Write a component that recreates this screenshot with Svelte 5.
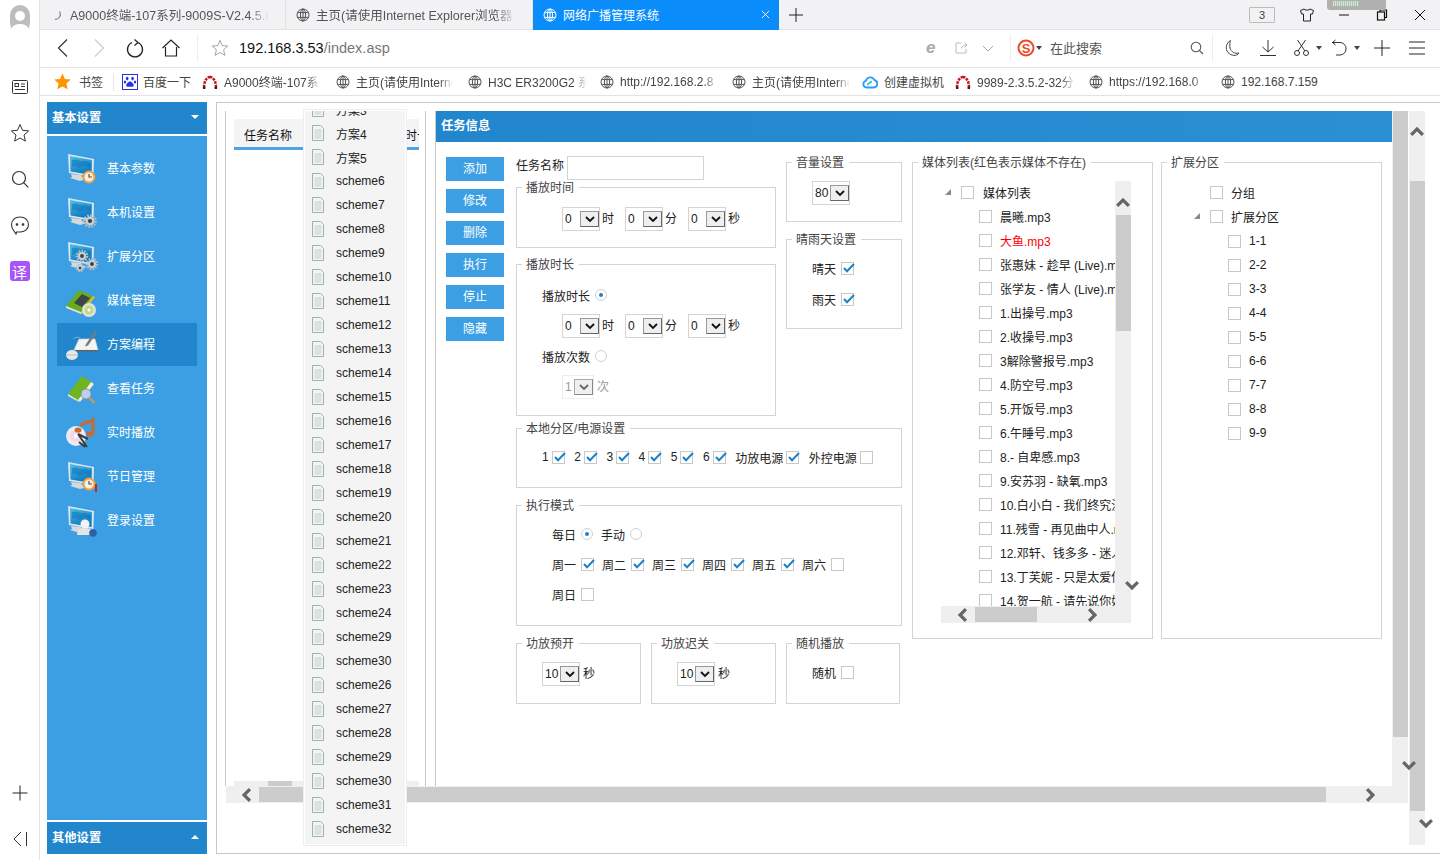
<script lang="ts">
  const tabs = [
    { icon: 'spin', label: 'A9000终端-107系列-9009S-V2.4.5.8', width: 246 },
    { icon: 'globe', label: '主页(请使用Internet Explorer浏览器', width: 247 },
    { icon: 'globe', label: '网络广播管理系统', width: 246, active: true },
  ];

  const bookmarks = [
    { icon: 'paw', label: '百度一下', w: 48, gap: 11 },
    { icon: 'arch', label: 'A9000终端-107系列', w: 97, gap: 15 },
    { icon: 'globe', label: '主页(请使用Internet', w: 97, gap: 15 },
    { icon: 'globe', label: 'H3C ER3200G2 系统', w: 99, gap: 13 },
    { icon: 'globe', label: 'http://192.168.2.8', w: 98, gap: 14 },
    { icon: 'globe', label: '主页(请使用Internet', w: 98, gap: 12 },
    { icon: 'cloud', label: '创建虚拟机', w: 60, gap: 11 },
    { icon: 'arch', label: '9989-2.3.5.2-32分区', w: 98, gap: 14 },
    { icon: 'globe', label: 'https://192.168.0', w: 97, gap: 15 },
    { icon: 'globe', label: '192.168.7.159', w: 80, gap: 0 },
  ];

  const menu = [
    { icon: 'clock', label: '基本参数' },
    { icon: 'gear', label: '本机设置' },
    { icon: 'gears', label: '扩展分区' },
    { icon: 'media', label: '媒体管理' },
    { icon: 'plan', label: '方案编程', active: true },
    { icon: 'task', label: '查看任务' },
    { icon: 'live', label: '实时播放' },
    { icon: 'holiday', label: '节日管理' },
    { icon: 'user', label: '登录设置' },
  ];

  const schemes = [
    '方案3', '方案4', '方案5',
    ...Array.from({ length: 19 }, (_, i) => 'scheme' + (i + 6)),
    'scheme29', 'scheme30', 'scheme26', 'scheme27', 'scheme28', 'scheme29', 'scheme30', 'scheme31', 'scheme32',
  ];

  const buttons = ['添加', '修改', '删除', '执行', '停止', '隐藏'];
  const zones = [
    { label: '1', on: true }, { label: '2', on: true }, { label: '3', on: true },
    { label: '4', on: true }, { label: '5', on: true }, { label: '6', on: true },
    { label: '功放电源', on: true }, { label: '外控电源', on: false },
  ];
  const days = [
    { label: '周一', on: true }, { label: '周二', on: true }, { label: '周三', on: true },
    { label: '周四', on: true }, { label: '周五', on: true }, { label: '周六', on: false },
  ];

  const media = [
    '晨曦.mp3', '大鱼.mp3', '张惠妹 - 趁早 (Live).mp3', '张学友 - 情人 (Live).mp3',
    '1.出操号.mp3', '2.收操号.mp3', '3解除警报号.mp3', '4.防空号.mp3', '5.开饭号.mp3', '6.午睡号.mp3',
    '8.- 自卑感.mp3', '9.安苏羽 - 缺氧.mp3', '10.白小白 - 我们终究没能走到', '11.残雪 - 再见曲中人.mp3',
    '12.邓轩、钱多多 - 迷人的危险', '13.丁芙妮 - 只是太爱你.mp3', '14.贺一航 - 请先说你好.mp3',
  ];
  const zonesExt = ['1-1', '2-2', '3-3', '4-4', '5-5', '6-6', '7-7', '8-8', '9-9'];
</script>

{#snippet globe(color = '#555')}
  <svg class="fav" viewBox="0 0 14 14" fill="none" stroke={color} stroke-width="1">
    <circle cx="7" cy="7" r="6" />
    <ellipse cx="7" cy="7" rx="2.6" ry="6" />
    <path d="M1.5 4.6h11M1.5 9.4h11M7 1v12" />
  </svg>
{/snippet}

{#snippet favicon(kind: string)}
  {#if kind === 'globe'}
    {@render globe()}
  {:else if kind === 'spin'}
    <svg class="fav" viewBox="0 0 14 14" fill="none" stroke="#888" stroke-width="1.2"><path d="M9.5 3.5a5 5 0 0 1-4.5 7.8" /></svg>
  {:else if kind === 'paw'}
    <svg class="fav paw" viewBox="0 0 16 16">
      <rect x=".5" y=".5" width="15" height="15" fill="#fff" stroke="#2932e1" />
      <g fill="#2932e1"><ellipse cx="5.2" cy="4.6" rx="1.3" ry="1.8" /><ellipse cx="10.6" cy="4.6" rx="1.3" ry="1.8" /><ellipse cx="3" cy="8" rx="1.2" ry="1.6" /><ellipse cx="13" cy="8" rx="1.2" ry="1.6" /><path d="M8 7.4c2 0 3.8 2.6 3.8 4.2 0 1.6-2.4 1.2-3.8 1.2s-3.8.4-3.8-1.2C4.2 10 6 7.4 8 7.4z" /></g>
    </svg>
  {:else if kind === 'arch'}
    <svg class="fav arch" viewBox="0 0 16 14" fill="none" stroke-width="2.6">
      <path d="M2 12.5C2 6 5 2 8 2" stroke="#c8141c" stroke-dasharray="2.6 1" />
      <path d="M14 12.5C14 6 11 2 8 2" stroke="#c8141c" stroke-dasharray="2.6 1" />
      <path d="M1 13h2.4M12.6 13H15" stroke="#222" />
    </svg>
  {:else if kind === 'cloud'}
    <svg class="fav arch" viewBox="0 0 16 14" fill="none" stroke-width="1.8">
      <path d="M4.5 12.5a3.4 3.4 0 0 1-.5-6.7A4.4 4.4 0 0 1 12.3 5a3.8 3.8 0 0 1-.3 7.5z" stroke="#2a9df4" />
      <path d="M5 9.5c2 0 2.6-2.8 5-2.8" stroke="#27c2e0" />
    </svg>
  {/if}
{/snippet}

{#snippet monitor()}
  <path d="M6 22l1 3-2 1 10 3 7-2-5-2-1-2z" fill="#d5d9dc" />
  <path d="M3 2l26 5-.6 18L4 21z" fill="#dbe6ec" />
  <path d="M5 4l22 4-.5 15L5.5 19.5z" fill="url(#screen)" />
  <path d="M7 8c5-2 8 2 11 1s5 2 8 1l-.2 5c-3 1-4-2-7-1s-4 3-6 1-4-1-5.5 0z" fill="#0f74b8" opacity=".55" />
{/snippet}

{#snippet gear(x: number, y: number, r: number)}
  <g transform="translate({x} {y})">
    <circle r={r} fill="none" stroke="#b6bcc0" stroke-width={r * 0.5} stroke-dasharray="1.6 1.2" />
    <circle r={r * 0.8} fill="#c9ced1" />
    <circle r={r * 0.38} fill="#39424a" />
  </g>
{/snippet}

{#snippet clock(x: number, y: number)}
  <circle cx={x} cy={y} r="6.5" fill="#f0a040" />
  <circle cx={x} cy={y} r="4.5" fill="#f5efe4" />
  <path d="M{x} {y - 3}v3h3" fill="none" stroke="#6a4a20" stroke-width="1.2" />
{/snippet}

{#snippet bookIcon()}
  <path d="M3 22L17 4l9 6-13 18z" fill="#6fb51d" />
  <path d="M3 22l10 6 1 2-11-6z" fill="#e9e6c8" />
  <path d="M13 28l13-18 3 2-14 18z" fill="#f3eed0" />
{/snippet}

{#snippet menuIcon(kind: string)}
  <svg class="menu-icon" viewBox="0 0 34 34">
    {#if kind === 'clock'}
      {@render monitor()}
      {@render clock(24, 25)}
    {:else if kind === 'gear'}
      {@render monitor()}
      {@render gear(25, 25, 5.5)}
    {:else if kind === 'gears'}
      {@render monitor()}
      {@render gear(17, 16, 5)}
      {@render gear(27, 24, 5)}
      {@render gear(15, 28, 3.5)}
    {:else if kind === 'media'}
      <path d="M1 22L14 6l14 6-12 16z" fill="#67ad1e" />
      <path d="M9 19l8-9 8 4-8 9z" fill="#3f4648" />
      <path d="M1 22l15 6v2L1 24z" fill="#e4e2c8" />
      <path d="M28 12l2 1-13 17h-1v-2z" fill="#e9b93a" />
      <circle cx="24" cy="26" r="7" fill="#dfe4da" />
      <circle cx="24" cy="26" r="4.5" fill="#c5d88a" />
      <circle cx="24" cy="26" r="1.5" fill="#fff" />
    {:else if kind === 'plan'}
      <path d="M9 22l5-11h16l3 11z" fill="#f4f5f3" stroke="#cfd4d4" stroke-width=".6" />
      <path d="M9 22h24v1.5H9z" fill="#5d666c" />
      <path d="M21 16l9-13 2 1.5-9 13-3 1z" fill="#757c80" />
      <path d="M8 11c3-3 8-2 8 1" fill="none" stroke="#88bce0" stroke-width=".8" />
      <ellipse cx="7" cy="27" rx="6" ry="5" fill="#e7e8e6" />
      <path d="M1 27h12" stroke="#aeb3b3" stroke-width=".7" />
    {:else if kind === 'task'}
      {@render bookIcon()}
      <circle cx="21" cy="22" r="5" fill="#c2cfe8" stroke="#8b93aa" stroke-width="1" />
      <path d="M24.5 26l5 5" stroke="#c8a040" stroke-width="2.2" />
    {:else if kind === 'live'}
      <circle cx="11" cy="20" r="10" fill="#f0e9ef" />
      <circle cx="11" cy="20" r="6" fill="#f3d7ea" />
      <circle cx="11" cy="20" r="2" fill="#fff" />
      <path d="M15 9l13-5v14" fill="none" stroke="#c96a30" stroke-width="3" />
      <ellipse cx="13" cy="14" rx="3.5" ry="2.6" fill="#c96a30" />
      <ellipse cx="25" cy="18" rx="3.5" ry="2.6" fill="#c96a30" />
      <path d="M13 18l10 5M13 18l9 13M14 26l6 5" stroke="#3c3c3c" stroke-width="2" />
    {:else if kind === 'holiday'}
      {@render monitor()}
      {@render clock(24, 24)}
      <rect x="30" y="24" width="2" height="8" fill="#c3262c" />
    {:else if kind === 'user'}
      {@render monitor()}
      <circle cx="20" cy="20" r="4.5" fill="#f2f3f4" />
      <path d="M12 31c0-6 4-7 8-7s8 1 8 7z" fill="#e2e4e6" />
      <circle cx="28" cy="29" r="3.8" fill="#2f5fa6" />
    {/if}
  </svg>
{/snippet}

{#snippet chevron(dir: string)}
  <svg class="chev {dir}" viewBox="0 0 12 12" fill="none" stroke="#666" stroke-width="2.8"><path d="M1 3.5l5 5 5-5" /></svg>
{/snippet}

{#snippet check(on: boolean)}
  <span class="cb">
    {#if on}
      <svg viewBox="0 0 13 13" fill="none" stroke="#1f81c5" stroke-width="2"><path d="M2.5 6l3 3.2L12.5 2" /></svg>
    {/if}
  </span>
{/snippet}

{#snippet radio(on: boolean)}
  <span class="radio" class:on></span>
{/snippet}

{#snippet select(value: string, disabled = false, narrow = false)}
  <span class="select" class:disabled class:narrow>
    <span class="select-value">{value}</span>
    <span class="select-btn">
      <svg viewBox="0 0 12 8" fill="none" stroke={disabled ? '#667' : '#111'} stroke-width="1.8"><path d="M2 2l4 4 4-4" /></svg>
    </span>
  </span>
{/snippet}

{#snippet hms()}
  <div class="hms">
    {#each ['时', '分', '秒'] as unit}
      <span class="hms-item">{@render select('0')}<span>{unit}</span></span>
    {/each}
  </div>
{/snippet}

{#snippet triangle()}
  <svg class="tri" viewBox="0 0 7 7"><path d="M7 0v7H0z" fill="#888" /></svg>
{/snippet}

<svg class="defs" width="0" height="0">
  <defs>
    <linearGradient id="screen" x1="0" y1="0" x2="0.4" y2="1">
      <stop offset="0" stop-color="#4fc0ea" />
      <stop offset="1" stop-color="#0e78bf" />
    </linearGradient>
  </defs>
</svg>

<div class="window">
  <aside class="rail">
    <div class="avatar">
      <svg viewBox="0 0 20 28">
        <rect width="20" height="28" rx="10" fill="#bdbdbd" />
        <circle cx="10" cy="11" r="5" fill="#fff" />
        <path d="M1 27c0-6 4-8 9-8s9 2 9 8c-3 2-15 2-18 0z" fill="#fff" />
      </svg>
    </div>
    <div class="rail-icons">
      <svg viewBox="0 0 20 20" fill="none" stroke="#333"><rect x="2.5" y="3.5" width="15" height="13" rx="1" /><rect x="5" y="6.5" width="3.5" height="3" /><path d="M11 7h4M11 9.5h4M5 12.5h10" /></svg>
      <svg viewBox="0 0 20 20" fill="none" stroke="#333"><path d="M10 1.5l2.5 5.8 6.2.6-4.7 4.1 1.4 6.1L10 15l-5.400 3.100L6 12 1.300 7.900l6.200-.6z" /></svg>
      <svg viewBox="0 0 20 20" fill="none" stroke="#333" stroke-width="1.2"><circle cx="9" cy="9" r="6.5" /><path d="M13.8 13.8l4.5 4.5" /></svg>
      <svg viewBox="0 0 20 20" fill="none" stroke="#333" stroke-width="1.1"><path d="M10 2c5 0 8.5 3 8.5 7.5S15 17 10 17H6.5l-.5 2-2-3C2.5 14.5 1.5 12 1.5 9.5 1.5 5 5 2 10 2z" /><circle cx="7" cy="9.5" r=".8" fill="#333" /><circle cx="13" cy="9.5" r=".8" fill="#333" /></svg>
      <span class="translate">译</span>
    </div>
    <div class="rail-bottom">
      <svg viewBox="0 0 20 20" fill="none" stroke="#222"><path d="M10 2.5v15M2.5 10h15" /></svg>
      <svg viewBox="0 0 20 20" fill="none" stroke="#333"><path d="M11 3L4 10l7 7M16.5 3v14" /></svg>
    </div>
  </aside>

  <div class="browser">
    <div class="tabs">
      {#each tabs as tab}
        <div class="tab" class:active={tab.active} style="width: {tab.width}px">
          {#if tab.active}{@render globe('#fff')}{:else}{@render favicon(tab.icon)}{/if}
          <span class="tab-label">{tab.label}</span>
          {#if tab.active}
            <svg class="tab-close" viewBox="0 0 10 10" fill="none" stroke="#fff"><path d="M1 1l8 8M9 1L1 9" /></svg>
          {/if}
        </div>
      {/each}
      <svg class="tab-add" viewBox="0 0 14 14" fill="none" stroke="#222"><path d="M7 0v14M0 7h14" /></svg>
      <div class="tab-right">
        <span class="tab-count">3</span>
        <svg class="shirt" viewBox="0 0 16 16" fill="none" stroke="#222"><path d="M5 2L1.5 3.5 2.5 7H4.5v7h7V7h2l1-3.5L11 2c-.5 1.5-5.5 1.5-6 0z" /></svg>
        <span class="gadget"><i></i></span>
        <svg class="win-btn" viewBox="0 0 12 12" fill="none" stroke="#111"><path d="M1 6h10" /></svg>
        <svg class="win-btn" viewBox="0 0 12 12" fill="none" stroke="#111" stroke-width="1.2"><rect x="1.5" y="3" width="7" height="8" /><path d="M4 3V1h6.5v7.5H8.5" /></svg>
        <svg class="win-btn" viewBox="0 0 12 12" fill="none" stroke="#111"><path d="M1 1l10 10M11 1L1 11" /></svg>
      </div>
    </div>

    <div class="toolbar">
      <svg class="nav" viewBox="0 0 20 20" fill="none" stroke="#333" stroke-width="1.2"><path d="M14 1.5L5.5 10l8.5 8.5" /></svg>
      <svg class="nav" viewBox="0 0 20 20" fill="none" stroke="#ccc" stroke-width="1.2"><path d="M6 1.5L14.5 10 6 18.5" /></svg>
      <svg class="nav" viewBox="0 0 20 20" fill="none" stroke="#222" stroke-width="1.3"><path d="M13 4.5a7.5 7.5 0 1 1-6 0M9.5 1.5l3.5 3-3.5 3" /></svg>
      <svg class="nav" viewBox="0 0 20 20" fill="none" stroke="#222" stroke-width="1.2"><path d="M1.5 10L10 2l8.5 8M4.5 9v9h11V9" /></svg>
      <i class="tool-sep"></i>
      <svg class="addr-star" viewBox="0 0 20 20" fill="none" stroke="#999"><path d="M10 1.5l2.5 5.8 6.2.6-4.7 4.1 1.4 6.1L10 15l-5.4 3.1L6 12 1.3 7.900l6.200-.6z" /></svg>
      <span class="url"><b>192.168.3.53</b>/index.asp</span>
      <div class="tool-right">
        <span class="ie">e</span>
        <svg class="tool-sm share" viewBox="0 0 14 14" fill="none" stroke="#bbb"><path d="M7 2H2v10h10V8M7.5 7.5C8 5 10 4 12.5 4M10.5 1.5L13 4l-2.5 2.5" /></svg>
        <svg class="tool-sm caret" viewBox="0 0 14 14" fill="none" stroke="#aaa"><path d="M2 5l5 5 5-5" /></svg>
        <i class="tool-sep"></i>
        <svg class="sogou" viewBox="0 0 18 18">
          <circle cx="9" cy="9" r="7.5" fill="#fff" stroke="#ef4a24" stroke-width="2" />
          <text x="9" y="13.5" text-anchor="middle" font-family="Liberation Sans" font-weight="700" font-size="13" fill="#ef4a24">S</text>
        </svg>
        <i class="mini-caret sg"></i>
        <span class="search-hint">在此搜索</span>
        <svg class="tool-sm mag" viewBox="0 0 14 14" fill="none" stroke="#555" stroke-width="1.1"><circle cx="6" cy="6" r="4.8" /><path d="M9.5 9.5L13 13" /></svg>
        <i class="tool-sep"></i>
        <svg class="tool-md moon" viewBox="0 0 18 18" fill="none" stroke="#444"><path d="M7.5 1.5C3 4 2 10 5 13.5s9 4 11 .5c-4 1-8-1-9-5-.6-3 0-6 .5-7.5z" /></svg>
        <svg class="tool-md down" viewBox="0 0 18 18" fill="none" stroke="#333"><path d="M9 1v12M3.5 8L9 13l5.5-5M1 16.5h16" /></svg>
        <svg class="tool-md cut" viewBox="0 0 18 18" fill="none" stroke="#333"><circle cx="4" cy="14" r="2.5" /><circle cx="13" cy="14" r="2.5" /><path d="M5 12L12.5 1M12 12L4.5 1" /></svg>
        <i class="mini-caret"></i>
        <svg class="tool-md undo" viewBox="0 0 18 18" fill="none" stroke="#333"><path d="M1 3.5h8a6 6 0 0 1 6 6.5 6 6 0 0 1-6 6H5M4.5 1L1.5 3.5 4.5 6" /></svg>
        <i class="mini-caret"></i>
        <svg class="tool-md plus" viewBox="0 0 18 18" fill="none" stroke="#222"><path d="M9 1v16M1 9h16" /></svg>
        <svg class="tool-md burger" viewBox="0 0 18 18" fill="none" stroke="#222"><path d="M1 3h16M1 9h16M1 15h16" /></svg>
      </div>
    </div>

    <div class="bookmarks">
      <svg class="bm-star" viewBox="0 0 16 16"><path d="M8 .5l2.3 5.1 5.5.6-4.1 3.7 1.2 5.5L8 12.6l-4.9 2.8 1.2-5.5L.2 6.2l5.5-.6z" fill="#ff9500" /></svg>
      <span class="bm-title">书签</span>
      <i class="bm-sep"></i>
      {#each bookmarks as bm}
        <span class="bm" style="margin-right: {bm.gap}px">
          {@render favicon(bm.icon)}
          <span class="bm-label" class:full={bm.gap === 11 || bm.gap === 0} style="width: {bm.w}px">{bm.label}</span>
        </span>
      {/each}
    </div>

    <div class="page">
      <nav class="sidebar">
        <div class="side-head"><b>基本设置</b><i class="tri-down"></i></div>
        <div class="side-body">
          {#each menu as item}
            <div class="side-item" class:active={item.active}>
              {@render menuIcon(item.icon)}
              <span>{item.label}</span>
            </div>
          {/each}
        </div>
        <div class="side-head"><b>其他设置</b><i class="tri-up"></i></div>
      </nav>

      <main class="content">
        <div class="viewport">
          <div class="viewport-top">
            <section class="task-list">
              <div class="task-head"><span>任务名称</span><span class="clip">时长</span></div>
              <div class="mini-scroll"><i></i></div>
            </section>

            <section class="task-info">
              <h2>任务信息</h2>
              <div class="info-body">
                <div class="actions">
                  {#each buttons as label}
                    <button type="button">{label}</button>
                  {/each}
                </div>

                <div class="form">
                  <div class="form-top">
                    <div class="col-a">
                      <div class="name-row"><span>任务名称</span><span class="name-input"></span></div>
                      <fieldset class="fs-time">
                        <legend>播放时间</legend>
                        {@render hms()}
                      </fieldset>
                      <fieldset class="fs-duration">
                        <legend>播放时长</legend>
                        <div class="opt-row">播放时长 {@render radio(true)}</div>
                        {@render hms()}
                        <div class="opt-row second">播放次数 {@render radio(false)}</div>
                        <div class="times">{@render select('1', true, true)}<span>次</span></div>
                      </fieldset>
                    </div>
                    <div class="col-b">
                      <fieldset class="fs-volume">
                        <legend>音量设置</legend>
                        {@render select('80')}
                      </fieldset>
                      <fieldset class="fs-weather">
                        <legend>晴雨天设置</legend>
                        <div class="weather-row">晴天 {@render check(true)}</div>
                        <div class="weather-row">雨天 {@render check(true)}</div>
                      </fieldset>
                    </div>
                  </div>

                  <fieldset class="fs-zones">
                    <legend>本地分区/电源设置</legend>
                    <div class="zones">
                      {#each zones as z}
                        <span class="zone">{z.label} {@render check(z.on)}</span>
                      {/each}
                    </div>
                  </fieldset>

                  <fieldset class="fs-mode">
                    <legend>执行模式</legend>
                    <div class="day-row">
                      <span class="day">每日 {@render radio(true)}</span>
                      <span class="day">手动 {@render radio(false)}</span>
                    </div>
                    <div class="day-row">
                      {#each days as d}
                        <span class="day">{d.label} {@render check(d.on)}</span>
                      {/each}
                    </div>
                    <div class="day-row"><span class="day">周日 {@render check(false)}</span></div>
                  </fieldset>

                  <div class="form-bottom">
                    <fieldset class="fs-amp">
                      <legend>功放预开</legend>
                      <div class="amp">{@render select('10')}<span>秒</span></div>
                    </fieldset>
                    <fieldset class="fs-amp">
                      <legend>功放迟关</legend>
                      <div class="amp">{@render select('10')}<span>秒</span></div>
                    </fieldset>
                    <fieldset class="fs-random">
                      <legend>随机播放</legend>
                      <div class="weather-row">随机 {@render check(false)}</div>
                    </fieldset>
                  </div>
                </div>

                <fieldset class="fs-media">
                  <legend>媒体列表(红色表示媒体不存在)</legend>
                  <div class="tree-box">
                    <div class="tree-main">
                      <div class="tree">
                        <div class="tree-row root">{@render triangle()}{@render check(false)}<span>媒体列表</span></div>
                        {#each media as name}
                          <div class="tree-row" class:missing={name.startsWith('大鱼')}>{@render check(false)}<span>{name}</span></div>
                        {/each}
                      </div>
                      <div class="tree-h">
                        {@render chevron('left')}
                        <i class="thumb"></i>
                        {@render chevron('right')}
                      </div>
                    </div>
                    <div class="tree-v">
                      {@render chevron('up')}
                      <i class="thumb"></i>
                      {@render chevron('down')}
                    </div>
                  </div>
                </fieldset>

                <fieldset class="fs-ext">
                  <legend>扩展分区</legend>
                  <div class="ext">
                    <div class="ext-row group">{@render check(false)}<span>分组</span></div>
                    <div class="ext-row group last">{@render triangle()}{@render check(false)}<span>扩展分区</span></div>
                    {#each zonesExt as z}
                      <div class="ext-row">{@render check(false)}<span>{z}</span></div>
                    {/each}
                  </div>
                </fieldset>
              </div>
            </section>

            <div class="v-scroll">
              <i class="thumb"></i>
              {@render chevron('down')}
            </div>
          </div>

          <div class="h-scroll">
            {@render chevron('left')}
            <i class="thumb"></i>
            {@render chevron('right')}
          </div>

          <div class="dropdown">
            <ul>
              {#each schemes as name}
                <li>
                  <svg viewBox="0 0 12 16">
                    <path d="M.5.5h8l3 3v12H.5z" fill="#f2f5f4" stroke="#9db0b5" />
                    <path d="M2.5 5h7M2.5 7h7M2.5 9h7M2.5 11h7M2.5 13h7" stroke="#c0d0cc" />
                  </svg>
                  <span>{name}</span>
                </li>
              {/each}
            </ul>
          </div>
        </div>

        <div class="outer-scroll">
          <span class="outer-top">{@render chevron('up')}</span>
          <i class="thumb"></i>
          {@render chevron('down')}
        </div>
      </main>
    </div>
  </div>
</div>

<style>
  :global(body) {
    margin: 0;
    background: #fff;
    overflow: hidden;
  }

  .defs {
    position: absolute;
  }

  .window {
    display: flex;
    width: 1440px;
    height: 860px;
    overflow: hidden;
    font-family: "Liberation Sans", "Noto Sans CJK SC", sans-serif;
    font-size: 12px;
    color: #222;
  }

  i {
    display: block;
    font-style: normal;
  }

  /* left rail */
  .rail {
    display: flex;
    flex-direction: column;
    align-items: center;
    flex: none;
    width: 40px;
    border-right: 1px solid #e4e4e4;
    box-sizing: border-box;
  }

  .avatar {
    display: flex;
    height: 34px;
    padding-top: 5px;
  }

  .avatar svg {
    width: 20px;
    height: 28px;
  }

  .rail-icons {
    display: flex;
    flex-direction: column;
    align-items: center;
    gap: 26px;
    margin-top: 38px;
  }

  .rail-icons svg,
  .rail-bottom svg {
    display: block;
    width: 20px;
    height: 20px;
  }

  .translate {
    display: flex;
    align-items: center;
    justify-content: center;
    width: 20px;
    height: 20px;
    border-radius: 3px;
    background: #a855f7;
    color: #fff;
    font-size: 15px;
  }

  .rail-bottom {
    display: flex;
    flex-direction: column;
    gap: 26px;
    margin-top: auto;
    margin-bottom: 11px;
  }

  .browser {
    display: flex;
    flex-direction: column;
    flex: 1;
    min-width: 0;
  }

  /* tabs */
  .tabs {
    display: flex;
    align-items: center;
    flex: none;
    height: 30px;
    box-sizing: border-box;
    background: #f2f2f5;
    border-bottom: 1px solid #e2e2e2;
  }

  .tab {
    display: flex;
    align-items: center;
    gap: 6px;
    height: 30px;
    box-sizing: border-box;
    padding-left: 10px;
    border-right: 1px solid #e2e2e2;
    color: #555;
    font-size: 12.5px;
  }

  .tab.active {
    background: #0a8cfb;
    border: 0;
    color: #fff;
    font-size: 12px;
  }

  .tab-label {
    width: 199px;
    overflow: hidden;
    white-space: nowrap;
    mask-image: linear-gradient(90deg, #000 90%, transparent);
  }

  .tab.active .tab-label {
    width: 192px;
    mask-image: none;
  }

  .tab-close {
    flex: none;
    width: 9px;
    height: 9px;
  }

  .fav {
    flex: none;
    width: 14px;
    height: 14px;
  }

  .fav.paw {
    width: 16px;
    height: 16px;
    margin-right: -1px;
  }

  .fav.arch {
    width: 16px;
    height: 14px;
  }

  .tab-add {
    width: 14px;
    height: 14px;
    margin-left: 10px;
  }

  .tab-right {
    display: flex;
    align-items: center;
    margin-left: auto;
    position: relative;
    height: 30px;
  }

  .tab-count {
    width: 24px;
    height: 14px;
    border: 1px solid #bbb;
    font-size: 11px;
    line-height: 14px;
    text-align: center;
    color: #444;
    margin-right: 24px;
    border-radius: 1px;
  }

  .shirt {
    width: 16px;
    height: 16px;
    margin-right: 23px;
  }

  .gadget {
    position: absolute;
    top: 0;
    left: 78px;
    width: 59px;
    height: 10px;
    border-radius: 0 0 3px 3px;
    background: #b0b0b0;
  }

  .gadget i {
    width: 26px;
    height: 5px;
    margin: 1px 0 0 6px;
    background: repeating-linear-gradient(90deg, #d7e4c8 0 1px, #a4c8c0 1px 2px);
  }

  .win-btn {
    width: 12px;
    height: 12px;
    margin-right: 26px;
  }

  .win-btn:last-child {
    margin-right: 14px;
  }

  /* toolbar */
  .toolbar {
    display: flex;
    align-items: center;
    flex: none;
    height: 38px;
    padding: 0 0 2px 13px;
    box-sizing: border-box;
    border-bottom: 1px solid #e2e2e2;
  }

  .nav {
    width: 20px;
    height: 20px;
    margin-right: 16px;
  }

  .tool-sep {
    flex: none;
    width: 1px;
    height: 28px;
    background: #eee;
  }

  .addr-star {
    width: 18px;
    height: 18px;
    margin: 0 10px 0 13px;
  }

  .url {
    font-size: 14.5px;
    color: #777;
  }

  .url b {
    font-weight: 400;
    color: #111;
  }

  .tool-right {
    display: flex;
    align-items: center;
    margin-left: auto;
    padding-right: 14px;
  }

  .ie {
    width: 14px;
    margin-right: 14px;
    color: #aaa;
    font: italic 700 17px "Liberation Sans", sans-serif;
  }

  .tool-sm {
    flex: none;
    width: 14px;
    height: 14px;
  }

  .share {
    margin-right: 13px;
  }

  .caret {
    margin-right: 15px;
  }

  .mag {
    margin: 0 8px 0 88px;
  }

  .sogou {
    flex: none;
    width: 18px;
    height: 18px;
    margin-left: 6px;
  }

  .mini-caret {
    flex: none;
    width: 0;
    height: 0;
    margin-left: 5px;
    border: 3px solid transparent;
    border-top: 4px solid #444;
    border-bottom: 0;
  }

  .mini-caret.sg {
    margin-left: 1px;
  }

  .search-hint {
    margin-left: 8px;
    font-size: 13px;
    color: #555;
    white-space: nowrap;
  }

  .tool-md {
    flex: none;
    width: 18px;
    height: 18px;
  }

  .moon {
    margin-left: 10px;
  }

  .down {
    margin-left: 18px;
  }

  .cut {
    margin-left: 16px;
  }

  .undo {
    margin-left: 9px;
  }

  .plus {
    margin-left: 13px;
  }

  .burger {
    margin-left: 17px;
  }

  /* bookmarks */
  .bookmarks {
    display: flex;
    align-items: center;
    flex: none;
    height: 28px;
    box-sizing: border-box;
    padding-left: 14px;
    border-bottom: 1px solid #e2e2e2;
    font-size: 12px;
    color: #444;
  }

  .bm-star {
    flex: none;
    width: 17px;
    height: 17px;
  }

  .bm-title {
    flex: none;
    margin-left: 8px;
    white-space: nowrap;
  }

  .bm-sep {
    flex: none;
    width: 1px;
    height: 18px;
    margin: 0 8px 0 10px;
    background: #e6e6e6;
  }

  .bm {
    display: flex;
    align-items: center;
    flex: none;
    gap: 6px;
  }

  .bm-label {
    overflow: hidden;
    white-space: nowrap;
    mask-image: linear-gradient(90deg, #000 86%, transparent);
  }

  .bm-label.full {
    mask-image: none;
  }

  /* page */
  .page {
    display: flex;
    flex: 1;
    min-height: 0;
    padding: 6px 0 6px 7px;
  }

  .sidebar {
    display: flex;
    flex-direction: column;
    flex: none;
    gap: 2px;
    width: 160px;
  }

  .side-head {
    display: flex;
    align-items: center;
    justify-content: space-between;
    flex: none;
    height: 32px;
    box-sizing: border-box;
    padding: 0 8px 2px 5px;
    background: #2186cc;
    color: #fff;
    font-size: 12.3px;
  }

  .tri-down,
  .tri-up {
    width: 0;
    height: 0;
    border: 4px solid transparent;
  }

  .tri-down {
    border-top: 4px solid #fff;
    border-bottom: 0;
  }

  .tri-up {
    border-bottom: 4px solid #fff;
    border-top: 0;
  }

  .side-body {
    display: flex;
    flex-direction: column;
    flex: 1;
    gap: 1px;
    padding: 11px 10px 0;
    background: #3c9fe3;
  }

  .side-item {
    display: flex;
    align-items: center;
    flex: none;
    height: 43px;
    padding: 0 0 2px 8px;
    box-sizing: border-box;
    color: #fff;
    font-size: 12px;
  }

  .side-item.active {
    background: #2186cc;
  }

  .menu-icon {
    flex: none;
    width: 34px;
    height: 34px;
    margin: 2px 8px 0 0;
  }

  /* content */
  .content {
    position: relative;
    display: flex;
    flex: 1;
    gap: 1px;
    min-width: 0;
    margin-left: 9px;
    padding: 8px 15px 8px 8px;
    border: 1px solid #c8c8c8;
    border-right: 0;
  }

  .viewport {
    position: relative;
    display: flex;
    flex-direction: column;
    width: 1183px;
    flex: none;
  }

  .viewport-top {
    display: flex;
    flex: none;
    height: 675px;
  }

  .task-list {
    display: flex;
    flex-direction: column;
    flex: none;
    width: 201px;
    box-sizing: border-box;
    padding: 8px 6px 0 8px;
    border: solid #c8c8c8;
    border-width: 0 1px;
  }

  .task-head {
    display: flex;
    justify-content: space-between;
    align-items: center;
    height: 31px;
    padding: 2px 0 0 10px;
    box-sizing: border-box;
    background: #f4f4f4;
    border-bottom: 3px solid #4ea5e6;
    color: #111;
    overflow: hidden;
  }

  .clip {
    width: 14px;
    overflow: hidden;
    white-space: nowrap;
  }

  .mini-scroll {
    margin-top: auto;
    height: 5px;
    background: #efefef;
  }

  .mini-scroll i {
    width: 24px;
    height: 5px;
    margin-left: 34px;
    background: #ccc;
  }

  .task-info {
    display: flex;
    flex-direction: column;
    flex: none;
    width: 957px;
    margin-left: 9px;
    box-sizing: border-box;
    border-left: 1px solid #c8c8c8;
  }

  .task-info h2 {
    margin: 0;
    flex: none;
    height: 31px;
    padding-left: 5px;
    background: linear-gradient(90deg, #2186cc, #2a8fd3);
    color: #fff;
    font-size: 12.3px;
    line-height: 30px;
  }

  .info-body {
    display: flex;
    padding: 12px 0 0 10px;
  }

  .actions {
    display: flex;
    flex-direction: column;
    flex: none;
    gap: 8px;
    width: 58px;
    margin: 3px 12px 0 0;
  }

  .actions button {
    height: 24px;
    padding: 0 0 4px;
    border: 0;
    background: #3c9fe3;
    color: #fff;
    font: inherit;
  }

  /* legend sits inside the fieldset padding, so cancel it per fieldset */
  fieldset {
    --pad: 0px;
    margin: 0;
    min-width: 0;
    box-sizing: border-box;
    padding: 0 0 0 var(--pad);
    border: 1px solid #d4d4d4;
  }

  legend {
    height: 16px;
    margin-left: calc(5px - var(--pad));
    padding: 0 5px 0 4px;
    color: #444;
    font-size: 12px;
    line-height: 18px;
    white-space: nowrap;
  }

  .form {
    display: flex;
    flex-direction: column;
    flex: none;
    width: 386px;
    margin-right: 10px;
  }

  .form-top {
    display: flex;
    gap: 10px;
  }

  .col-a {
    flex: none;
    width: 260px;
  }

  .col-b {
    flex: none;
    width: 116px;
  }

  .name-row {
    display: flex;
    align-items: flex-start;
    gap: 3px;
    height: 24px;
    margin: 2px 0 -1px;
    line-height: 20px;
    color: #222;
  }

  .name-input {
    width: 135px;
    height: 22px;
    border: 1px solid #d4d4d4;
  }

  .select {
    display: inline-flex;
    align-items: center;
    justify-content: space-between;
    flex: none;
    width: 38px;
    height: 24px;
    box-sizing: border-box;
    padding: 0 0 0 2px;
    border: 1px solid #d4d4d4;
    color: #222;
    font-size: 12px;
  }

  .select.narrow {
    width: 32px;
    border-color: #eee;
    color: #999;
  }

  .select-btn {
    display: flex;
    align-items: center;
    justify-content: center;
    width: 19px;
    height: 16px;
    box-sizing: border-box;
    border: 1px solid #777;
    border-color: #999 #666 #666 #999;
    background: #efefef;
  }

  .select.narrow .select-btn {
    border-color: #aaa #888 #888 #aaa;
  }

  .select-btn svg {
    width: 12px;
    height: 8px;
  }

  .hms {
    display: flex;
    gap: 11px;
    padding-left: 45px;
  }

  .hms-item {
    display: flex;
    align-items: flex-start;
    gap: 2px;
    line-height: 24px;
  }

  .fs-time {
    height: 69px;
    padding-top: 12px;
  }

  .fs-duration {
    height: 160px;
    margin-top: 8px;
    padding-top: 15px;
  }

  .opt-row {
    display: flex;
    align-items: center;
    gap: 5px;
    height: 16px;
    margin-bottom: 11px;
    padding-left: 25px;
  }

  .opt-row.second {
    margin: 10px 0 11px;
  }

  .times {
    display: flex;
    align-items: flex-start;
    gap: 3px;
    padding-left: 45px;
    color: #999;
    line-height: 24px;
  }

  .fs-volume {
    --pad: 25px;
    height: 68px;
    padding-top: 11px;
  }

  .fs-weather {
    --pad: 25px;
    height: 98px;
    margin-top: 9px;
    padding-top: 13px;
  }

  .weather-row {
    display: flex;
    align-items: center;
    gap: 5px;
    height: 16px;
    margin-bottom: 15px;
  }

  .cb {
    display: inline-block;
    flex: none;
    position: relative;
    width: 13px;
    height: 13px;
    box-sizing: border-box;
    border: 1px solid #c8c8c8;
    background: #fff;
  }

  .cb svg {
    position: absolute;
    top: -1px;
    left: -1px;
    width: 14px;
    height: 13px;
  }

  .radio {
    display: inline-block;
    flex: none;
    position: relative;
    width: 12px;
    height: 12px;
    box-sizing: border-box;
    border: 1px solid #d0d0d0;
    border-radius: 50%;
  }

  .radio.on::after {
    content: "";
    position: absolute;
    top: 3px;
    left: 3px;
    width: 4px;
    height: 4px;
    border-radius: 50%;
    background: #1f81c5;
  }

  .fs-zones {
    --pad: 25px;
    height: 68px;
    margin-top: 4px;
    padding-top: 13px;
  }

  .zones {
    display: flex;
    gap: 9.5px;
  }

  .zone {
    display: flex;
    align-items: center;
    gap: 3px;
    height: 16px;
  }

  .fs-mode {
    --pad: 35px;
    height: 129px;
    margin-top: 9px;
    padding-top: 13px;
  }

  .day-row {
    display: flex;
    gap: 8px;
    margin-bottom: 14px;
  }

  .day {
    display: flex;
    align-items: center;
    gap: 5px;
    height: 16px;
  }

  .form-bottom {
    display: flex;
    gap: 10px;
    margin-top: 9px;
  }

  .fs-amp {
    --pad: 25px;
    flex: none;
    width: 125px;
    height: 69px;
    padding-top: 11px;
  }

  .amp {
    display: flex;
    align-items: flex-start;
    gap: 3px;
    line-height: 24px;
  }

  .fs-random {
    --pad: 25px;
    flex: none;
    width: 114px;
    height: 69px;
    padding-top: 13px;
  }

  .fs-media {
    --pad: 28px;
    flex: none;
    width: 241px;
    height: 485px;
    margin-right: 8px;
    padding-top: 11px;
  }

  .tree-box {
    display: flex;
    width: 190px;
    height: 442px;
  }

  .tree-main {
    display: flex;
    flex-direction: column;
    width: 174px;
    min-width: 0;
  }

  .tree {
    flex: 1;
    min-height: 0;
    overflow: hidden;
    white-space: nowrap;
  }

  .tree-row {
    display: flex;
    align-items: center;
    height: 24px;
    padding-left: 38px;
    color: #222;
  }

  .tree-row span {
    margin-left: 8px;
  }

  .tree-row.root {
    margin-top: -1px;
    padding-left: 4px;
  }

  .tree-row.root .cb {
    margin-left: 10px;
  }

  .tree-row.root span {
    margin-left: 9px;
  }

  .tree-row.missing {
    color: #f00;
  }

  .tri {
    flex: none;
    width: 6px;
    height: 6px;
  }

  .tree-h {
    display: flex;
    align-items: center;
    flex: none;
    height: 17px;
    background: #efefef;
  }

  .tree-h .thumb {
    width: 62px;
    height: 15px;
    margin: 0 48px 0 5px;
    background: #ccc;
  }

  .tree-h .chev.left {
    margin-left: 15px;
  }

  .tree-v {
    display: flex;
    flex-direction: column;
    align-items: center;
    flex: none;
    width: 16px;
    background: #efefef;
    padding-top: 15px;
    box-sizing: border-box;
  }

  .tree-v .thumb {
    width: 15px;
    height: 116px;
    margin: 5px 0 247px;
    background: #ccc;
  }

  .fs-ext {
    flex: none;
    width: 221px;
    height: 485px;
    padding-top: 10px;
  }

  .ext-row {
    display: flex;
    align-items: center;
    height: 24px;
    padding-left: 58px;
  }

  .ext-row span {
    margin-left: 8px;
  }

  .ext-row.group {
    padding-left: 40px;
    position: relative;
  }

  .ext-row.group.last {
    margin-bottom: 1px;
  }

  .ext-row.group .tri {
    position: absolute;
    left: 32px;
    top: 9px;
  }

  .chev {
    display: block;
    flex: none;
    width: 14px;
    height: 14px;
  }

  .chev.up {
    transform: rotate(180deg);
  }

  .chev.left {
    transform: rotate(90deg);
  }

  .chev.right {
    transform: rotate(-90deg);
  }

  .v-scroll {
    display: flex;
    flex-direction: column;
    align-items: center;
    flex: none;
    width: 16px;
    background: #efefef;
  }

  .v-scroll .thumb {
    width: 15px;
    height: 626px;
    margin-bottom: 21px;
    background: #ccc;
  }

  .h-scroll {
    display: flex;
    align-items: center;
    flex: none;
    height: 17px;
    margin-left: 1px;
    background: #efefef;
  }

  .h-scroll .chev.left {
    margin-left: 14px;
  }

  .h-scroll .thumb {
    width: 1067px;
    height: 15px;
    margin: 0 37px 0 5px;
    background: #ccc;
  }

  .outer-scroll {
    display: flex;
    flex-direction: column;
    align-items: center;
    flex: none;
    width: 16px;
    background: #efefef;
  }

  .outer-top {
    display: block;
    height: 55px;
    padding-top: 14px;
    box-sizing: border-box;
    flex: none;
  }

  .outer-scroll .thumb {
    width: 15px;
    height: 630px;
    margin: 15px 0 5px;
    background: #ccc;
  }

  .dropdown {
    position: absolute;
    top: 0;
    left: 80px;
    width: 100px;
    height: 733px;
    overflow: hidden;
    background: #f4f4f4;
    box-shadow: 0 0 0 1px #fff, 0 0 0 2px #eee;
  }

  .dropdown ul {
    margin: -14px 0 0;
    padding: 0;
    list-style: none;
  }

  .dropdown li {
    display: flex;
    align-items: center;
    height: 24px;
    padding-left: 7px;
    color: #222;
    font-size: 12px;
  }

  .dropdown li svg {
    flex: none;
    width: 12px;
    height: 16px;
    margin-right: 12px;
  }

  .tree-row {
    padding-left: 30px;
  }
</style>
